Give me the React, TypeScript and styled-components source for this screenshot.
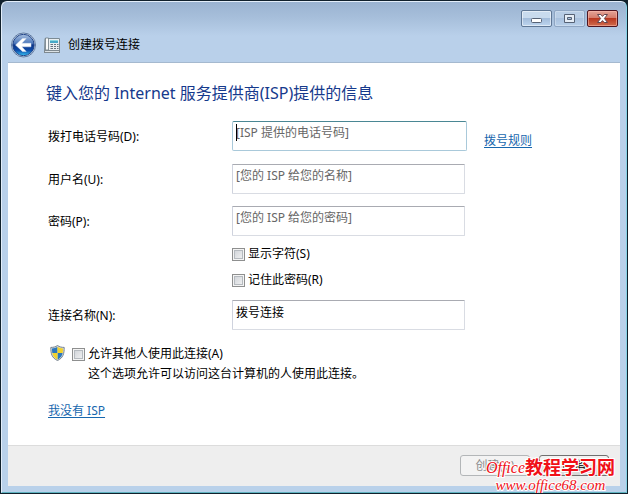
import React from "react";
import styled, { createGlobalStyle, css } from "styled-components";

const Global = createGlobalStyle`
  * { box-sizing: border-box; }
  body {
    margin: 0;
    background: #10202c;
    font-family: "Noto Sans", "Noto Sans CJK SC", sans-serif;
    font-size: 12px;
    line-height: 18px;
    color: #000;
  }
  button, input { font: inherit; }
`;

const Window = styled.main`
  position: relative;
  display: flex;
  flex-direction: column;
  min-height: calc(100vh - 2px);
  margin: 1px 1px 0 1px;
  padding: 0 6px 6px;
  border: 1px solid #e3eefa;
  border-right-color: #86d3e6;
  border-bottom-color: #5fb3c0;
  border-radius: 6px 6px 0 0;
  background: linear-gradient(#9ab3d1 0, #a7bfdb 16px, #b9d0ea 34px, #b9d1ea 100%);
`;

const TitleBar = styled.header`
  display: flex;
  flex-direction: column;
  height: 60px;
`;

const Controls = styled.div`
  display: flex;
  justify-content: flex-end;
  gap: 2px;
  padding: 8px 2px 0 0;
`;

const ControlButton = styled.button<{ $kind?: "faint" | "close" }>`
  display: flex;
  align-items: center;
  justify-content: center;
  width: 31px;
  height: 17px;
  padding: 0;
  border: 1px solid #5f7795;
  border-radius: 2px;
  box-shadow: inset 0 0 0 1px rgba(255, 255, 255, 0.5);
  background: linear-gradient(#c9dbee 0 48%, #a4bddb 50%, #bdd5ee);
  ${(p) => p.$kind === "faint" && css`
    border-color: #8fa6c3;
    box-shadow: inset 0 0 0 1px rgba(255, 255, 255, 0.25);
    background: linear-gradient(#b9cee6 0 48%, #a9c1de 50%, #b7cfe9);
  `}
  ${(p) => p.$kind === "close" && css`
    border-color: #4f1520;
    box-shadow: inset 0 0 0 1px rgba(255, 190, 175, 0.55);
    background: linear-gradient(#e3a397 0, #d57c6b 46%, #b93820 50%, #cf6c4d);
  `}
`;

const Nav = styled.div`
  display: flex;
  align-items: center;
  gap: 8px;
  height: 26px;
  margin-top: 5px;
  padding-left: 3px;
`;

const BackButton = styled.button`
  display: flex;
  padding: 0;
  border: 0;
  background: none;
`;

const Page = styled.section`
  display: flex;
  flex: 1;
  flex-direction: column;
  border-top: 1px solid #a5b9cf;
  background: #fff;
`;

const Body = styled.form`
  flex: 1;
  padding: 18px 12px 24px 40px;
`;

const Heading = styled.h1`
  margin: 0 0 16px -2px;
  font-size: 16px;
  line-height: 24px;
  font-weight: 400;
  color: #15398c;
`;

const Row = styled.div<{ $gap: number }>`
  display: grid;
  grid-template-columns: 184px minmax(0, 235px) auto;
  align-items: center;
  height: 30px;
  margin-bottom: ${(p) => p.$gap}px;
`;

const FieldLabel = styled.label`
  padding-top: 2px;
`;

const Field = styled.div`
  position: relative;
  display: flex;
`;

const TextBox = styled.input<{ $active?: boolean }>`
  width: calc(100% - 2px);
  height: 30px;
  padding: 0 3px 7px;
  border: 1px solid #d9dce3;
  border-top-color: #a9abb2;
  border-left-color: #cfd3de;
  border-radius: 1px;
  background: #fff;
  color: #000;
  outline: none;
  &::placeholder { color: #666; opacity: 1; }
  ${(p) => p.$active && css`
    width: 100%;
    border-color: #a9c9da;
    border-top-color: #4a8794;
    border-radius: 2px;
  `}
`;

const Caret = styled.span`
  position: absolute;
  top: 3px;
  left: 4px;
  width: 1px;
  height: 17px;
  background: #000;
`;

const Link = styled.a`
  color: #1767ae;
  text-decoration: underline;
  text-underline-offset: 2px;
`;

const RulesLink = styled(Link)`
  padding: 10px 0 0 17px;
`;

const Checks = styled.div`
  display: flex;
  flex-direction: column;
  align-items: flex-start;
  gap: 8px;
  margin: 0 0 11px 184px;
`;

const CheckLabel = styled.label`
  display: flex;
  align-items: center;
  gap: 3px;
`;

const Tick = styled.input`
  appearance: none;
  flex: none;
  width: 13px;
  height: 13px;
  margin: 0;
  border: 1px solid #8e8f8f;
  box-shadow: inset 0 0 0 1px #f4f4f4, inset 0 0 0 2px #b5babf;
  background: linear-gradient(135deg, #cbcfd5, #f6f6f6);
  &:checked { background: #3c6fb0; }
`;

const Sharing = styled.div`
  display: flex;
  align-items: center;
  gap: 7px;
  padding-left: 2px;
`;

const Note = styled.p`
  margin: 2px 0 19px 40px;
`;

const Footer = styled.footer`
  display: flex;
  justify-content: flex-end;
  gap: 9px;
  height: 41px;
  padding: 9px 11px 0;
  border-top: 1px solid #dcdcdc;
  background: #eeeeee;
`;

const ActionButton = styled.button`
  width: 70px;
  height: 21px;
  padding: 0;
  line-height: 18px;
  border: 1px solid #707070;
  border-radius: 3px;
  background: linear-gradient(#f2f2f2 0 48%, #e2e2e2 50%, #d6d6d6);
  color: #000;
  &:disabled {
    border-color: #b3b6b8;
    background: #f3f3f3;
    color: #8b8b8b;
  }
`;

const Watermark = styled.div`
  position: absolute;
  right: 11px;
  bottom: 0;
  display: flex;
  flex-direction: column;
  align-items: center;
  font-family: "Liberation Serif", "Noto Sans CJK SC", serif;
  font-style: italic;
  color: #f01018;
  white-space: nowrap;
  pointer-events: none;
  paint-order: stroke fill;
  -webkit-text-stroke: 2px #fff;
`;

const Brand = styled.div`
  display: flex;
  align-items: center;
  font-size: 16px;
  line-height: 20px;
`;

const BrandName = styled.b`
  font-size: 18px;
  font-style: normal;
`;

const Site = styled.div`
  font-size: 15px;
  line-height: 14px;
`;

const BackIcon = () => (
  <svg width="25" height="26" viewBox="0 0 25 26" aria-hidden="true">
    <defs>
      <linearGradient id="orb" x1="0" y1="0" x2="0" y2="1">
        <stop offset="0" stopColor="#a7bfdf" />
        <stop offset=".42" stopColor="#4d78bb" />
        <stop offset=".5" stopColor="#0c3588" />
        <stop offset=".75" stopColor="#0d4dab" />
        <stop offset="1" stopColor="#38c3f3" />
      </linearGradient>
    </defs>
    <circle cx="12.5" cy="13" r="12" fill="#e2edf8" stroke="#5d789f" />
    <circle cx="12.5" cy="13" r="10.7" fill="url(#orb)" stroke="#24478a" />
    <path d="M4.5 13 11.5 6.5h3.7l-4.4 4.8h9.2v3.5h-9.2l4.4 4.7h-3.7Z" fill="#fff" stroke="#dce7f5" strokeWidth=".5" />
  </svg>
);

const PhoneIcon = () => (
  <svg width="16" height="16" viewBox="0 0 16 16" aria-hidden="true">
    <path d="M1 1.5h14.5v12H.5Z" fill="#e9eef0" stroke="#7c8b95" />
    <path d="M1.5 1h3v12h-3Z" fill="#f9fafa" stroke="#6b7882" strokeWidth=".8" />
    <path d="M6 3h8v3H6Z" fill="#48a9c7" />
    <path d="M6 3h8v1H6Z" fill="#8ad8df" />
    <path d="M6.500 7.500H9M10 7.500h2M13 7.500h1.500M6.500 9.500H9M10 9.500h2M13 9.500h1.500M6.500 11.500H9M10 11.500h2M13 11.500h1.500" stroke="#67747d" />
    <path d="M0 13h16v3H0Z" fill="#7e8990" />
    <path d="M1 14.500h14" stroke="#dce2e5" />
  </svg>
);

const ShieldIcon = () => (
  <svg width="15" height="18" viewBox="0 0 15 16" preserveAspectRatio="xMidYMin meet" aria-hidden="true">
    <defs>
      <clipPath id="shield">
        <path d="M7.5 1.8C5.8 3 4 3.4 2 3.4c0 5 .8 8.800 5.500 11.100C12.200 12.200 13 8.400 13 3.400c-2 0-3.800-.4-5.500-1.600Z" />
      </clipPath>
    </defs>
    <path d="M7.500.5C5.500 2 3.300 2.400.8 2.400c0 6.300 1 10.600 6.700 13.100 5.700-2.500 6.700-6.800 6.700-13.100-2.500 0-4.700-.4-6.700-1.900Z" fill="#d5dce2" stroke="#78848f" />
    <g clipPath="url(#shield)">
      <path d="M0 0h7.500v8H0ZM7.500 8H15v8H7.500Z" fill="#2b78bd" />
      <path d="M7.500 0H15v8H7.500ZM0 8h7.500v8H0Z" fill="#f2d32c" />
    </g>
  </svg>
);

const MinimizeIcon = () => (
  <svg width="13" height="11" viewBox="0 0 13 11" aria-hidden="true">
    <rect x="1.500" y="5.500" width="10" height="4" rx="1" fill="#fff" stroke="#566275" />
  </svg>
);

const MaximizeIcon = () => (
  <svg width="13" height="11" viewBox="0 0 13 11" aria-hidden="true">
    <path d="M1.500 1.500h10v8h-10ZM4.500 4.500v2h4v-2Z" fill="#e5edf6" fillRule="evenodd" stroke="#566275" />
  </svg>
);

const CloseIcon = () => (
  <svg width="13" height="11" viewBox="0 0 13 11" aria-hidden="true">
    <path d="M1.500 1.500h3.300l1.700 1.900 1.700-1.900h3.300L8.400 5.500l3.100 4H8.200L6.500 7.600 4.800 9.500H1.500l3.100-4Z" fill="#fff" stroke="#624650" />
  </svg>
);

export default function App() {
  return (
    <>
      <Global />
      <Window>
        <TitleBar>
          <Controls>
            <ControlButton aria-label="最小化"><MinimizeIcon /></ControlButton>
            <ControlButton $kind="faint" aria-label="最大化"><MaximizeIcon /></ControlButton>
            <ControlButton $kind="close" aria-label="关闭"><CloseIcon /></ControlButton>
          </Controls>
          <Nav>
            <BackButton aria-label="返回"><BackIcon /></BackButton>
            <PhoneIcon />
            <span>创建拨号连接</span>
          </Nav>
        </TitleBar>
        <Page>
          <Body id="dialup" onSubmit={(e) => e.preventDefault()}>
            <Heading>键入您的 Internet 服务提供商(ISP)提供的信息</Heading>
            <Row $gap={13}>
              <FieldLabel htmlFor="phone">拨打电话号码(D):</FieldLabel>
              <Field>
                <TextBox id="phone" $active placeholder="[ISP 提供的电话号码]" />
                <Caret />
              </Field>
              <RulesLink href="#rules">拨号规则</RulesLink>
            </Row>
            <Row $gap={12}>
              <FieldLabel htmlFor="user">用户名(U):</FieldLabel>
              <Field><TextBox id="user" placeholder="[您的 ISP 给您的名称]" /></Field>
            </Row>
            <Row $gap={9}>
              <FieldLabel htmlFor="pass">密码(P):</FieldLabel>
              <Field><TextBox id="pass" type="password" placeholder="[您的 ISP 给您的密码]" /></Field>
            </Row>
            <Checks>
              <CheckLabel><Tick type="checkbox" />显示字符(S)</CheckLabel>
              <CheckLabel><Tick type="checkbox" />记住此密码(R)</CheckLabel>
            </Checks>
            <Row $gap={15}>
              <FieldLabel htmlFor="name">连接名称(N):</FieldLabel>
              <Field><TextBox id="name" defaultValue="拨号连接" /></Field>
            </Row>
            <Sharing>
              <ShieldIcon />
              <CheckLabel><Tick type="checkbox" aria-describedby="share-note" />允许其他人使用此连接(A)</CheckLabel>
            </Sharing>
            <Note id="share-note">这个选项允许可以访问这台计算机的人使用此连接。</Note>
            <Link href="#no-isp">我没有 ISP</Link>
          </Body>
          <Footer>
            <ActionButton type="submit" form="dialup" disabled>创建(C)</ActionButton>
            <ActionButton type="button">取消</ActionButton>
          </Footer>
        </Page>
        <Watermark>
          <Brand>Office<BrandName>教程学习网</BrandName></Brand>
          <Site>www.office68.com</Site>
        </Watermark>
      </Window>
    </>
  );
}
